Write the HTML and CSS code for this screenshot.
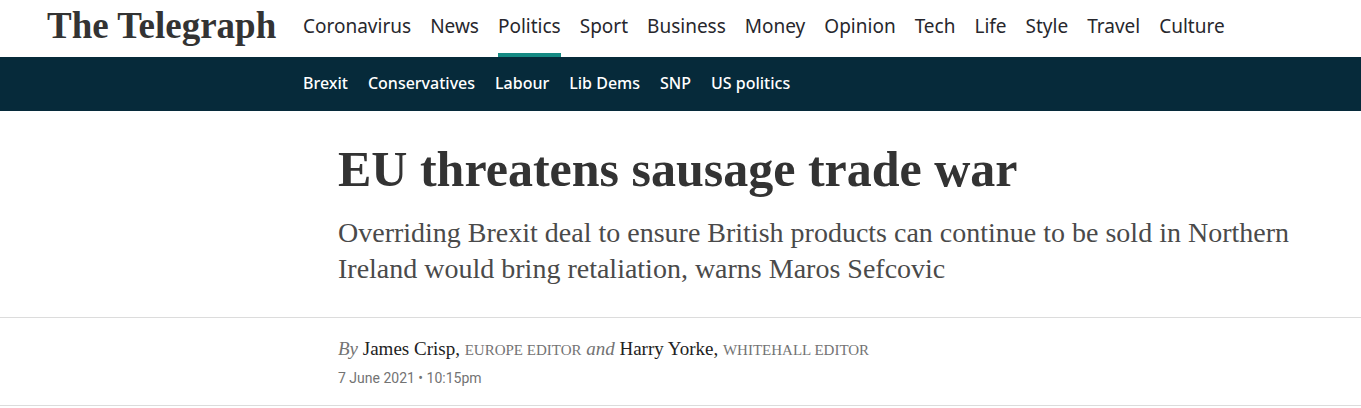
FILE: index.html
```html
<!DOCTYPE html>
<html lang="en">
<head>
    <meta charset="UTF-8">
    <meta name="viewport" content="width=device-width, initial-scale=1.0">
    <title>EU threatens sausage trade war</title>
    <link rel="stylesheet" href="styles.css">
</head>
<body>
    <header class="site-header">
        <div class="header-top">
            <a class="logo" href="#">The Telegraph</a>
            <nav class="main-nav">
                <a href="#">Coronavirus</a>
                <a href="#">News</a>
                <a class="active" href="#">Politics</a>
                <a href="#">Sport</a>
                <a href="#">Business</a>
                <a href="#">Money</a>
                <a href="#">Opinion</a>
                <a href="#">Tech</a>
                <a href="#">Life</a>
                <a href="#">Style</a>
                <a href="#">Travel</a>
                <a href="#">Culture</a>
            </nav>
        </div>
        <nav class="sub-nav">
            <a href="#">Brexit</a>
            <a href="#">Conservatives</a>
            <a href="#">Labour</a>
            <a href="#">Lib Dems</a>
            <a href="#">SNP</a>
            <a href="#">US politics</a>
        </nav>
    </header>
    <main class="article">
        <div class="article-head">
            <h1 class="headline">EU threatens sausage trade war</h1>
            <p class="standfirst">Overriding Brexit deal to ensure British products can continue to be sold in Northern Ireland would bring retaliation, warns Maros Sefcovic</p>
        </div>
        <div class="byline">
            <p class="authors"><i>By</i> <a href="#">James Crisp,</a> <span class="role">Europe Editor</span> <i>and</i> <a href="#">Harry Yorke,</a> <span class="role">Whitehall Editor</span></p>
            <time class="date" datetime="2021-06-07T22:15">7 June 2021 • 10:15pm</time>
        </div>
    </main>
</body>
</html>
```
FILE: styles.css
```css
* {
    box-sizing: border-box;
}
body {
    margin: 0;
    background: #fff;
    color: #333;
    font-family: "Liberation Serif", serif;
}
a {
    color: inherit;
    text-decoration: none;
}
.header-top {
    display: flex;
    height: 57px;
    padding-left: 47px;
}
.logo {
    width: 256px;
    flex-shrink: 0;
    font-size: 37px;
    font-weight: 700;
    line-height: 52px;
    white-space: nowrap;
}
.main-nav {
    display: flex;
    gap: 19px;
    font-family: "Noto Sans", sans-serif;
    font-size: 19px;
    line-height: 52px;
    color: #27272d;
}
.main-nav a {
    border-bottom: 4px solid transparent;
    height: 57px;
}
.main-nav .active {
    border-color: #158a83;
}
.sub-nav {
    display: flex;
    gap: 20px;
    height: 54px;
    padding-left: 303px;
    background: #062a3a;
    color: #fff;
    font-family: "Noto Sans", sans-serif;
    font-size: 16px;
    font-weight: 500;
    line-height: 52px;
}
.article-head {
    padding: 32px 64px 30px 338px;
    border-bottom: 1px solid #dcdcdc;
}
.headline {
    margin: 0;
    font-size: 50px;
    line-height: 52px;
}
.standfirst {
    margin: 20px 0 0;
    color: #4a4a4a;
    font-size: 28px;
    line-height: 36px;
}
.byline {
    padding: 19px 64px 15px 338px;
    border-bottom: 1px solid #dcdcdc;
    color: #737373;
}
.authors {
    margin: 0;
    font-size: 19px;
    line-height: 24px;
}
.authors a {
    color: #222;
}
.role {
    font-size: 15px;
    text-transform: uppercase;
}
.date {
    display: block;
    margin-top: 4px;
    font-family: Roboto, sans-serif;
    font-size: 14px;
    line-height: 24px;
}
```
